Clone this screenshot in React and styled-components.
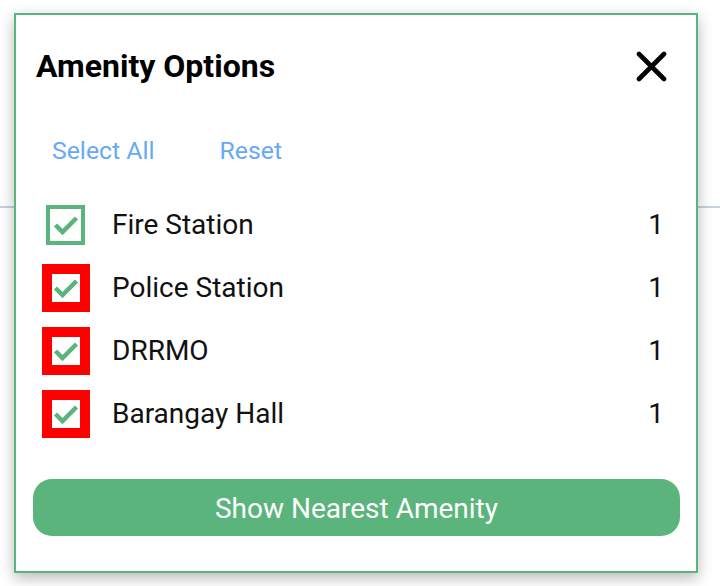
import React from "react";
import styled, { createGlobalStyle } from "styled-components";

const GREEN = "#5ab47b";

const GlobalStyle = createGlobalStyle`
  html, body { margin: 0; padding: 0; background: #ffffff; }
  body { font-family: Roboto, "Noto Sans", Arial, sans-serif; }
  * { box-sizing: border-box; }
`;

const Page = styled.div`
  position: relative;
  width: 720px;
  height: 586px;
  overflow: hidden;
  background: #ffffff;
`;

const BackdropBar = styled.div`
  height: 208px;
  border-bottom: 2px solid #c8d2de;
`;

const Modal = styled.div`
  position: absolute;
  top: 13px;
  left: 14px;
  width: 684px;
  height: 560px;
  background: #ffffff;
  border: 2px solid ${GREEN};
  box-shadow: 0 5px 14px rgba(0, 0, 0, 0.28);
  display: flex;
  flex-direction: column;
`;

const Header = styled.div`
  display: flex;
  align-items: center;
  justify-content: space-between;
  height: 50px;
  margin-top: 26px;
  padding: 0 29px 0 20px;
`;

const Title = styled.h2`
  margin: 0;
  font-size: 32px;
  font-weight: 700;
  color: #000;
  line-height: 1;
`;

const CloseButton = styled.button`
  border: 0;
  background: none;
  padding: 0;
  width: 31px;
  height: 31px;
  display: flex;
  cursor: pointer;
`;

const LinkRow = styled.div`
  display: flex;
  align-items: center;
  gap: 65px;
  height: 40px;
  margin-top: 39px;
  padding-left: 36px;
`;

const LinkButton = styled.button`
  border: 0;
  background: none;
  padding: 0;
  font-family: inherit;
  font-size: 24.8px;
  color: #66aaf5;
  cursor: pointer;
`;

const List = styled.ul`
  list-style: none;
  margin: 23px 0 0;
  padding: 0;
`;

const Row = styled.li`
  display: flex;
  align-items: center;
  height: 63px;
  padding: 0 32px 0 25px;
`;

const BoxSlot = styled.div`
  width: 49px;
  display: flex;
  justify-content: center;
  align-items: center;
`;

const Box = styled.div`
  display: flex;
  align-items: center;
  justify-content: center;
  background: #fff;
  ${({ $focused }) =>
    $focused
      ? `width: 28px; height: 28px; outline: 10px solid #ff0000;`
      : `width: 39px; height: 40px; border: 4px solid ${GREEN};`}
`;

const Label = styled.span`
  flex: 1;
  margin-left: 22px;
  font-size: 28px;
  color: #111;
`;

const Count = styled.span`
  font-size: 28px;
  color: #111;
`;

const ShowButton = styled.button`
  margin: 34px 16px 0 17px;
  height: 57px;
  border: 0;
  border-radius: 19px;
  background: ${GREEN};
  color: #ffffff;
  font-family: inherit;
  font-size: 28px;
  padding-top: 3px;
  cursor: pointer;
`;

const Check = () => (
  <svg width="26" height="22" viewBox="0 0 26 22">
    <polyline
      points="2.5,11 9.5,18 23.5,4"
      fill="none"
      stroke={GREEN}
      strokeWidth="4.5"
      strokeLinejoin="miter"
    />
  </svg>
);

const CloseIcon = () => (
  <svg width="31" height="31" viewBox="0 0 31 31">
    <path
      d="M3 3 L28 28 M28 3 L3 28"
      stroke="#000"
      strokeWidth="4.6"
      strokeLinecap="round"
    />
  </svg>
);

const items = [
  { name: "Fire Station", count: 1, focused: false },
  { name: "Police Station", count: 1, focused: true },
  { name: "DRRMO", count: 1, focused: true },
  { name: "Barangay Hall", count: 1, focused: true },
];

export default function App() {
  return (
    <>
      <GlobalStyle />
      <Page>
        <BackdropBar />
        <Modal>
          <Header>
            <Title>Amenity Options</Title>
            <CloseButton aria-label="Close">
              <CloseIcon />
            </CloseButton>
          </Header>
          <LinkRow>
            <LinkButton>Select All</LinkButton>
            <LinkButton>Reset</LinkButton>
          </LinkRow>
          <List>
            {items.map((it) => (
              <Row key={it.name}>
                <BoxSlot>
                  <Box $focused={it.focused}>
                    <Check />
                  </Box>
                </BoxSlot>
                <Label>{it.name}</Label>
                <Count>{it.count}</Count>
              </Row>
            ))}
          </List>
          <ShowButton>Show Nearest Amenity</ShowButton>
        </Modal>
      </Page>
    </>
  );
}
